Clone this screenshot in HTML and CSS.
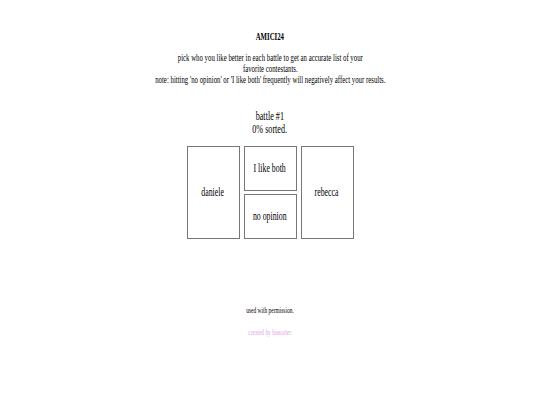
FILE: index.html
```html
<!DOCTYPE html>
<html>
<head>
<meta charset="utf-8">
<link rel="stylesheet" href="styles.css">
</head>
<body>
<div class="page">
  <h1 class="title"><span class="cond">AMICI24</span></h1>
  <p class="intro"><span class="cond">pick who you like better in each battle to get an accurate list of your<br>favorite contestants.<br>note: hitting 'no opinion' or 'I like both' frequently will negatively affect your results.</span></p>
  <div class="status">
    <div><span class="cond">battle #1</span></div>
    <div><span class="cond">0% sorted.</span></div>
  </div>
  <div class="battle">
    <div class="choice big"><span class="cond">daniele</span></div>
    <div class="middle">
      <div class="choice small"><span class="cond">I like both</span></div>
      <div class="choice small"><span class="cond">no opinion</span></div>
    </div>
    <div class="choice big"><span class="cond">rebecca</span></div>
  </div>
  <p class="permission"><span class="cond">used with permission.</span></p>
  <p class="credit"><span class="cond">created by biasorter.</span></p>
</div>
</body>
</html>
```
FILE: styles.css
```css
html, body { margin: 0; padding: 0; background: #fff; }
.page {
  font-family: "Liberation Serif", "Times New Roman", serif;
  color: #000;
  text-align: center;
  padding-top: 31px;
}
.cond {
  display: inline-block;
  font-family: "Liberation Serif", "Times New Roman", serif;
  transform: scaleX(0.68);
  transform-origin: center;
  white-space: nowrap;
}
.title { font-size: 10px; font-weight: bold; margin: 0; line-height: 12px; }
.intro { font-size: 10px; line-height: 11px; margin: 9px 0 0; }
.status { font-size: 12px; line-height: 13px; margin-top: 25px; }
.battle { display: flex; justify-content: center; gap: 4px; margin-top: 10px; }
.choice {
  border: 1px solid #777;
  box-sizing: border-box;
  display: flex;
  align-items: center;
  justify-content: center;
  font-size: 11.5px;
  padding-bottom: 2px;
}
.big { width: 53px; height: 93px; }
.middle { display: flex; flex-direction: column; gap: 3px; }
.small { width: 53px; height: 45px; }
.permission { font-size: 8px; margin: 67px 0 0; line-height: 10px; }
.credit { font-size: 8px; margin: 12px 0 0; line-height: 10px; color: #e4a6e4; }
```
